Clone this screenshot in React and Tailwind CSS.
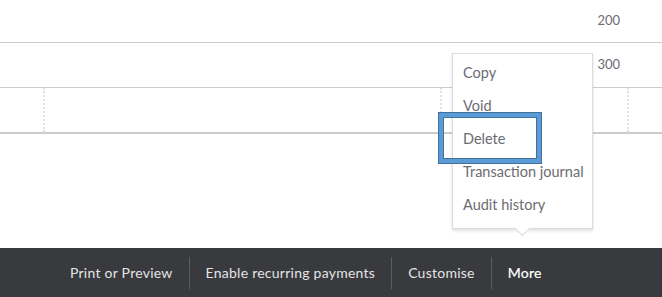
const menuItems = ["Copy", "Void", "Delete", "Transaction journal", "Audit history"];
const barItems = ["Print or Preview", "Enable recurring payments", "Customise", "More"];

const App = () => {
  return (
    <div className="relative flex flex-col w-[662px] h-[297px] bg-white overflow-hidden font-['Lato',sans-serif] text-[#6b6c72]">
      <div className="flex flex-col">
        <div className="flex h-[43px] border-b border-[#cccccc]">
          <div className="w-[628px] flex items-center justify-end pr-2 text-[13px]">200</div>
        </div>
        <div className="flex h-[45px] border-b border-[#cccccc]">
          <div className="w-[628px] flex items-center justify-end pr-2 text-[13px]">300</div>
        </div>
        <div className="flex h-[46px] border-b-2 border-[#cccccc]">
          <div className="w-[45px] border-r-2 border-dotted border-[#e2e2e2]" />
          <div className="w-[397px] border-r-2 border-dotted border-[#e2e2e2]" />
          <div className="w-[187px] border-r-2 border-dotted border-[#e2e2e2]" />
          <div className="flex-1" />
        </div>
      </div>

      <div className="mt-auto flex items-center h-[49px] bg-[#393a3d] pl-[54px] text-[14px] tracking-[0.25px] text-[#e4e4e6]">
        {barItems.map((item, i) => (
          <div
            key={item}
            className={`flex items-center h-[32px] px-4 ${i > 0 ? "border-l border-[#5c5d61]" : ""} ${item === "More" ? "text-white [-webkit-text-stroke:0.2px_#ffffff]" : ""}`}
          >
            {item}
          </div>
        ))}
      </div>

      <div className="absolute left-[452px] top-[53px] w-[141px] bg-white border border-[#dcdcdc] shadow-[0_2px_3px_rgba(0,0,0,0.12)] pt-[2px] pb-[7px] text-[14.5px]">
        {menuItems.map((item) => (
          <div key={item} className="h-[33px] flex items-center px-[10px] whitespace-nowrap">
            {item}
          </div>
        ))}
        <div className="absolute left-[64px] -bottom-[6px] w-[11px] h-[11px] rotate-45 bg-white border-r border-b border-[#dcdcdc]" />
      </div>

      <div className="absolute left-[439px] top-[113px] w-[102px] h-[50px] border-4 border-[#5b9bd5] shadow-[0_0_0_1px_#41719c,inset_0_0_0_1px_#41719c]" />
    </div>
  );
};

export default App;
